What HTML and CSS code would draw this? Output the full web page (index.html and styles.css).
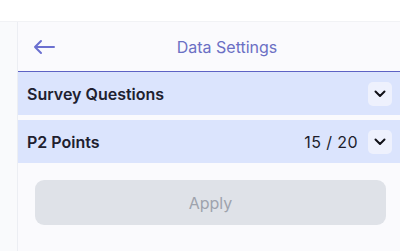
FILE: index.html
```html
<!DOCTYPE html>
<html>
<head>
<meta charset="utf-8">
<link rel="stylesheet" href="styles.css">
</head>
<body>
<div class="topbar"></div>
<div class="layout">
  <div class="side"></div>
  <div class="main">
    <div class="header">
      <button class="back" aria-label="Back">
        <svg width="22" height="16" viewBox="0 0 22 16" fill="none" stroke="currentColor" stroke-width="2" stroke-linecap="round" stroke-linejoin="round"><path d="M21 8H2M8 2L2 8l6 6"/></svg>
      </button>
      <div class="title">Data Settings</div>
    </div>
    <div class="row">
      <div class="label">Survey Questions</div>
      <div class="right">
        <button class="chev" aria-label="Expand"><svg width="12" height="8" viewBox="0 0 12 8" fill="none" stroke="currentColor" stroke-width="2" stroke-linecap="round" stroke-linejoin="round"><path d="M1.5 1.5L6 6l4.5-4.5"/></svg></button>
      </div>
    </div>
    <div class="row second">
      <div class="label">P2 Points</div>
      <div class="right">
        <span class="count">15 / 20</span>
        <button class="chev" aria-label="Expand"><svg width="12" height="8" viewBox="0 0 12 8" fill="none" stroke="currentColor" stroke-width="2" stroke-linecap="round" stroke-linejoin="round"><path d="M1.5 1.5L6 6l4.5-4.5"/></svg></button>
      </div>
    </div>
    <div class="actions">
      <button class="apply" disabled>Apply</button>
    </div>
  </div>
</div>
</body>
</html>
```

FILE: styles.css
```css
* { box-sizing: border-box; }
html, body { margin: 0; padding: 0; }
body {
  width: 400px;
  height: 251px;
  overflow: hidden;
  background: #ffffff;
  font-family: Inter, "Liberation Sans", sans-serif;
}
.topbar {
  height: 22px;
  background: #ffffff;
  border-bottom: 1px solid #f1f2f5;
}
.layout {
  display: flex;
  height: 229px;
}
.side {
  width: 18px;
  background: #f9fafc;
  border-right: 1px solid #eceef3;
}
.main {
  flex: 1;
  background: #fafafd;
  display: flex;
  flex-direction: column;
}
.header {
  height: 50px;
  display: flex;
  align-items: center;
  padding: 0 10px 0 14px;
  border-bottom: 1px solid #5d62c4;
}
.back {
  width: 24px;
  height: 24px;
  padding: 0;
  border: none;
  background: transparent;
  color: #6b70d0;
  display: flex;
  align-items: center;
  justify-content: center;
}
.title {
  flex: 1;
  text-align: center;
  font-size: 16px;
  color: #6b6fc4;
  padding-left: 8px;
}
.row {
  height: 43px;
  background: #dbe4fd;
  display: flex;
  align-items: center;
  justify-content: space-between;
  padding: 0 8px 0 9px;
}
.row.second { margin-top: 5px; }
.label {
  font-size: 16px;
  font-weight: 600;
  color: #20202f;
}
.right {
  display: flex;
  align-items: center;
  gap: 10px;
}
.count {
  font-size: 16px;
  color: #1d1d2c;
  letter-spacing: 0.4px;
}
.chev {
  width: 24px;
  height: 24px;
  padding: 0;
  border: none;
  border-radius: 5px;
  background: #eef1fd;
  color: #111118;
  display: flex;
  align-items: center;
  justify-content: center;
}
.actions {
  padding: 17px 14px 0 17px;
}
.apply {
  width: 100%;
  height: 45px;
  border: none;
  border-radius: 9px;
  background: #dfe2e8;
  color: #9ea3ad;
  font-family: Inter, "Liberation Sans", sans-serif;
  font-size: 16px;
}
```
